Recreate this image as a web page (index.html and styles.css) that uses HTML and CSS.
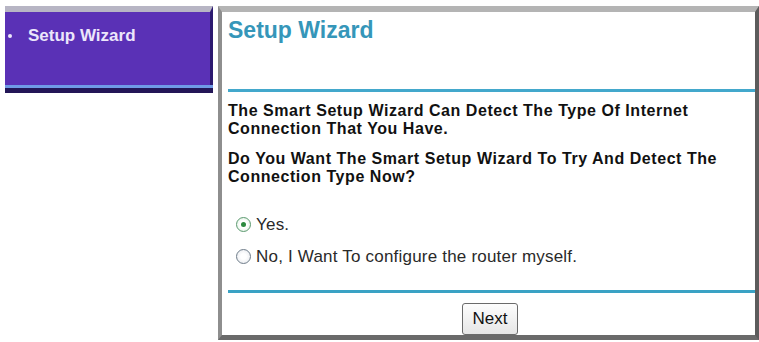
FILE: index.html
```html
<!DOCTYPE html>
<html>
<head>
<meta charset="utf-8">
<link rel="stylesheet" href="styles.css">
</head>
<body>
<div class="page">
  <nav class="sidebar">
    <div class="nav-body">
      <ul class="nav-list">
        <li class="nav-item">Setup Wizard</li>
      </ul>
    </div>
    <div class="nav-rule"></div>
  </nav>
  <main class="panel">
    <div class="panel-head">
      <h1 class="title">Setup Wizard</h1>
    </div>
    <div class="panel-body">
      <p class="question">The Smart Setup Wizard Can Detect The Type Of Internet Connection That You Have.</p>
      <p class="question">Do You Want The Smart Setup Wizard To Try And Detect The Connection Type Now?</p>
      <div class="options">
        <label class="option"><span class="radio checked"></span>Yes.</label>
        <label class="option"><span class="radio"></span>No, I Want To configure the router myself.</label>
      </div>
    </div>
    <div class="panel-foot">
      <button class="next-btn" type="button">Next</button>
    </div>
  </main>
</div>
</body>
</html>
```

FILE: styles.css
```css
html, body {
  margin: 0;
  padding: 0;
  background: #ffffff;
  font-family: "Liberation Sans", Arial, sans-serif;
}

.page {
  display: flex;
  align-items: flex-start;
  gap: 5px;
  padding: 6px 0 0 5px;
}

.sidebar {
  width: 208px;
  display: flex;
  flex-direction: column;
}

.nav-body {
  height: 73px;
  background: #5a31b6;
  border-top: 6px solid #b7b5c4;
  border-right: 3px solid #2c1a70;
}

.nav-list {
  list-style: none;
  margin: 0;
  padding: 14px 0 0 3px;
}

.nav-item {
  color: #ece6fb;
  font-weight: bold;
  font-size: 17px;
  display: flex;
  align-items: center;
}

.nav-item::before {
  content: "";
  width: 4px;
  height: 4px;
  border-radius: 50%;
  background: #ece6fb;
  margin-right: 16px;
}

.nav-rule {
  height: 5px;
  border-top: 3px solid #6f9ae6;
  background: #231657;
}

.panel {
  width: 533px;
  height: 323px;
  border-top: 6px solid #b4b4b4;
  border-left: 4px solid #8e8e8e;
  border-right: 4px solid #5c5c5c;
  border-bottom: 5px solid #6a6a6a;
  display: flex;
  flex-direction: column;
  background: #ffffff;
}

.panel-head {
  height: 77px;
  margin-left: 6px;
  border-bottom: 3px solid #43a8cc;
}

.title {
  margin: 5px 0 0 0;
  font-size: 23px;
  font-weight: bold;
  color: #3596b9;
  line-height: 26px;
}

.panel-body {
  height: 202px;
  padding-top: 10px;
  box-sizing: border-box;
  margin-left: 6px;
  border-bottom: 3px solid #3aa2c4;
}

.question {
  margin: 0 0 12px 0;
  max-width: 520px;
  font-size: 16px;
  letter-spacing: 0.55px;
  font-weight: bold;
  line-height: 18px;
  color: #111111;
}

.options {
  margin-top: 23px;
  margin-left: 8px;
}

.option {
  display: flex;
  align-items: center;
  gap: 5px;
  font-size: 17px;
  letter-spacing: 0.2px;
  color: #2a2a2a;
  height: 32px;
}

.radio {
  width: 13px;
  height: 13px;
  border: 1px solid #6f7d8a;
  border-radius: 50%;
  background: radial-gradient(circle, #ffffff 30%, #e2e5ea 100%);
  display: flex;
  align-items: center;
  justify-content: center;
  flex: none;
}

.radio.checked {
  border-color: #5c9a70;
  background: radial-gradient(circle, #ffffff 40%, #d6ecd9 100%);
}

.radio.checked::after {
  content: "";
  width: 5px;
  height: 5px;
  border-radius: 50%;
  background: #2b8a3e;
}

.panel-foot {
  flex: 1;
  display: flex;
  justify-content: center;
  align-items: flex-start;
  padding-top: 10px;
  padding-left: 3px;
}

.next-btn {
  font-family: "Liberation Sans", Arial, sans-serif;
  font-size: 17px;
  color: #111111;
  background: linear-gradient(#fdfdfd, #e6e6e6);
  border: 1px solid #6b6b6b;
  border-radius: 3px;
  width: 56px;
  height: 32px;
  padding: 0;
}
```
